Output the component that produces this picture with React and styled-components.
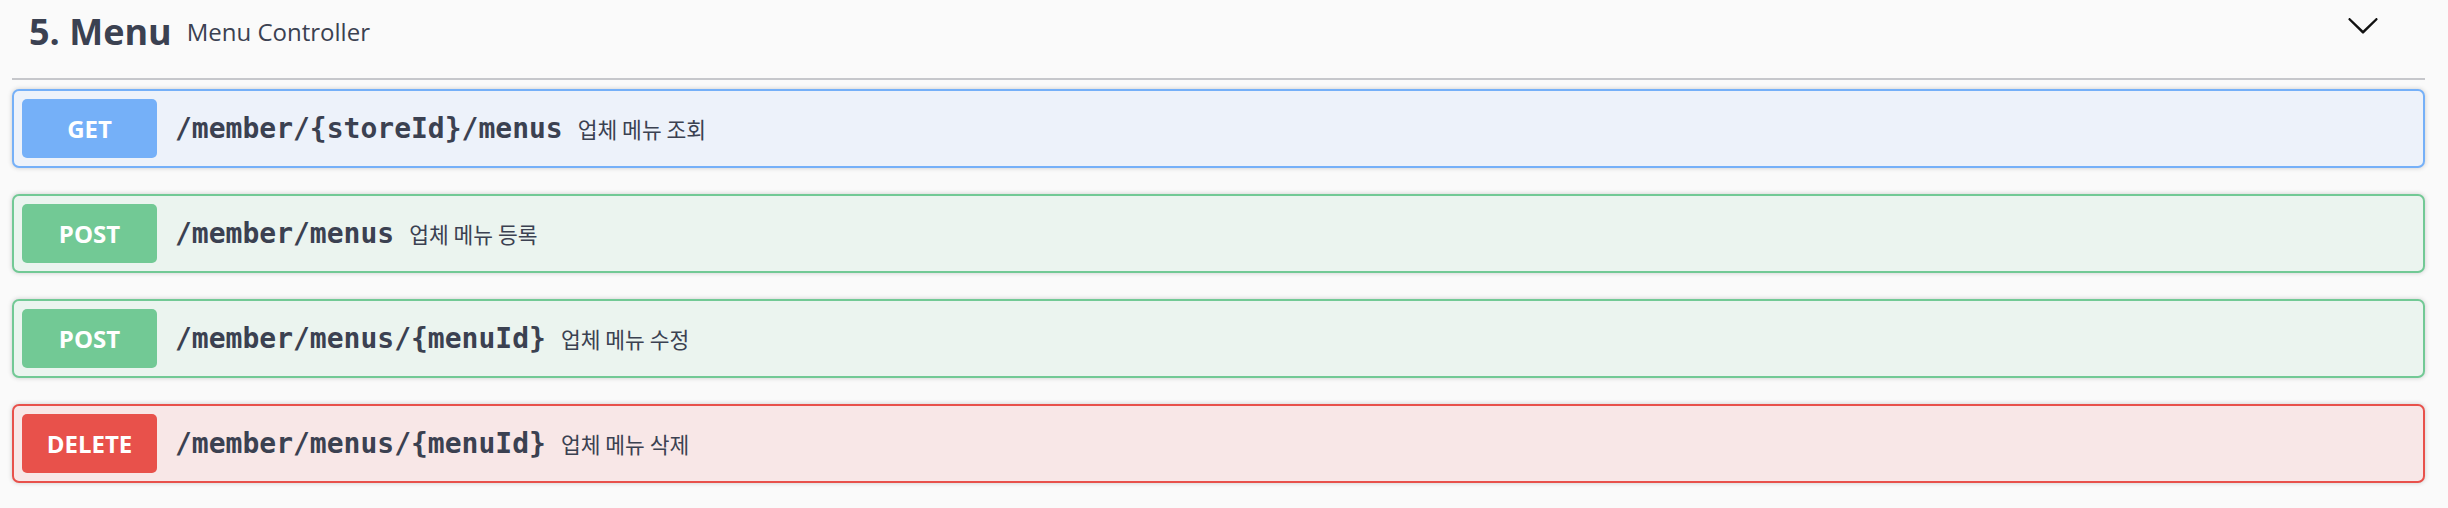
import React from "react";
import styled, { createGlobalStyle } from "styled-components";

const GlobalStyle = createGlobalStyle`
  body {
    margin: 0;
    background: #fafafa;
    font-family: "Open Sans", "Noto Sans CJK KR", sans-serif;
    color: #3b4151;
  }
`;

const METHOD_COLORS = {
  GET: { main: "#75b0f8", bg: "#edf2fa" },
  POST: { main: "#72c995", bg: "#ebf4ef" },
  DELETE: { main: "#e8514b", bg: "#f8e7e7" },
};

const Wrapper = styled.div`
  padding: 0 23px 0 12px;
`;

const TagHeader = styled.div`
  display: flex;
  align-items: flex-start;
  box-sizing: border-box;
  height: 80px;
  padding: 7px 45px 0 17px;
  border-bottom: 2px solid #c6c7cb;
`;

const TitleRow = styled.div`
  flex: 1;
  display: flex;
  align-items: center;
  height: 49px;
`;

const Title = styled.h3`
  margin: 0;
  font-family: "Open Sans", sans-serif;
  font-size: 36px;
  font-weight: 700;
  line-height: 49px;
  color: #3b4151;
`;

const SubTitle = styled.small`
  padding: 0 15px;
  font-family: "Open Sans", sans-serif;
  font-size: 24px;
  color: #3b4151;
`;

const Chevron = styled.svg`
  width: 34px;
  height: 34px;
  margin-top: 1px;
  fill: #111;
`;

const OpList = styled.div`
  padding-top: 9px;
`;

const OpBlock = styled.div`
  margin-bottom: 26px;
  border: 2px solid ${(p) => p.$color.main};
  border-radius: 7px;
  background: ${(p) => p.$color.bg};
  box-shadow: 0 0 5px rgba(0, 0, 0, 0.19);
`;

const Summary = styled.div`
  display: flex;
  align-items: center;
  padding: 8px;
`;

const Method = styled.span`
  display: flex;
  align-items: center;
  justify-content: center;
  width: 135px;
  height: 59px;
  border-radius: 5px;
  background: ${(p) => p.$color.main};
  color: #fff;
  font-family: "Open Sans", sans-serif;
  font-size: 24px;
  font-weight: 700;
`;

const Path = styled.span`
  padding-left: 18px;
  font-family: "DejaVu Sans Mono", monospace;
  font-size: 28px;
  font-weight: 700;
  color: #3b4151;
`;

const Description = styled.span`
  padding-left: 15px;
  font-family: "Noto Sans CJK KR", "Noto Sans", sans-serif;
  font-size: 21.5px;
  color: #3b4151;
`;

const operations = [
  { method: "GET", path: "/member/{storeId}/menus", desc: "업체 메뉴 조회" },
  { method: "POST", path: "/member/menus", desc: "업체 메뉴 등록" },
  { method: "POST", path: "/member/menus/{menuId}", desc: "업체 메뉴 수정" },
  { method: "DELETE", path: "/member/menus/{menuId}", desc: "업체 메뉴 삭제" },
];

const App = () => {
  return (
    <>
      <GlobalStyle />
      <Wrapper>
        <TagHeader>
          <TitleRow>
            <Title>5. Menu</Title>
            <SubTitle>Menu Controller</SubTitle>
          </TitleRow>
          <Chevron viewBox="0 0 20 20">
            <path d="M17.418 6.109c.272-.268.709-.268.979 0s.271.701 0 .969l-7.908 7.83c-.27.268-.707.268-.979 0l-7.908-7.83c-.27-.268-.27-.701 0-.969.271-.268.709-.268.979 0L10 13.25l7.418-7.141z" />
          </Chevron>
        </TagHeader>
        <OpList>
          {operations.map((op, i) => (
            <OpBlock key={i} $color={METHOD_COLORS[op.method]}>
              <Summary>
                <Method $color={METHOD_COLORS[op.method]}>{op.method}</Method>
                <Path>{op.path}</Path>
                <Description>{op.desc}</Description>
              </Summary>
            </OpBlock>
          ))}
        </OpList>
      </Wrapper>
    </>
  );
};

export default App;
